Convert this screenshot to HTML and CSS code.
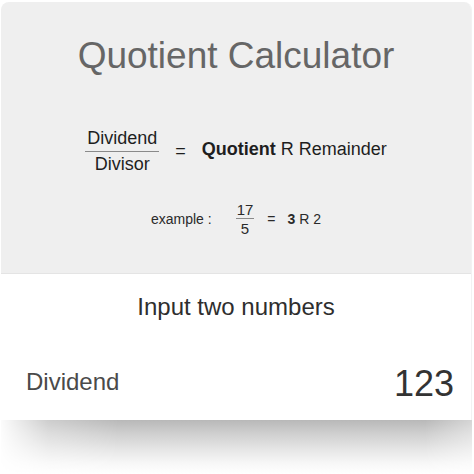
FILE: index.html
```html
<!DOCTYPE html>
<html>
<head>
<meta charset="utf-8">
<link rel="stylesheet" href="styles.css">
</head>
<body>
<div class="card">
  <div class="head">
    <h1 class="title">Quotient Calculator</h1>
    <div class="formula">
      <div class="frac">
        <span class="num">Dividend</span>
        <span class="den">Divisor</span>
      </div>
      <span class="eq">=</span>
      <span class="result"><b>Quotient</b> R Remainder</span>
    </div>
    <div class="example">
      <span class="ex-label">example :</span>
      <div class="frac small">
        <span class="num">17</span>
        <span class="den">5</span>
      </div>
      <span class="eq">=</span>
      <span class="ex-result"><b>3</b> R 2</span>
    </div>
  </div>
  <div class="body">
    <div class="subtitle">Input two numbers</div>
    <div class="row">
      <span class="label">Dividend</span>
      <span class="value">123</span>
    </div>
  </div>
</div>
<div class="shade"></div>
</body>
</html>
```

FILE: styles.css
```css
html, body {
  margin: 0;
  padding: 0;
  background: #ffffff;
}
body {
  font-family: "Liberation Sans", Arial, sans-serif;
}
.card {
  margin: 2px 2px 0 1px;
  border-radius: 8px 8px 0 0;
  overflow: hidden;
  border-right: 1px solid #f2f2f2;
}
.head {
  box-sizing: border-box;
  height: 272px;
  background: #efefef;
  border-bottom: 1px solid #e4e4e4;
  padding-top: 34px;
}
.title {
  margin: 0;
  font-weight: normal;
  font-size: 37px;
  line-height: 40px;
  color: #666666;
  text-align: center;
}
.formula {
  margin-top: 52px;
  display: flex;
  justify-content: center;
  align-items: center;
  color: #1e1e1e;
  font-size: 18px;
  line-height: 20px;
}
.frac {
  display: flex;
  flex-direction: column;
  align-items: stretch;
  text-align: center;
}
.frac .num {
  padding: 0 2px 3px;
  border-bottom: 1px solid #8a8a8a;
}
.frac .den {
  padding-top: 2px;
}
.formula .eq {
  margin: 0 16px 0 16px;
}
.result {
  margin-bottom: 4px;
}
.example {
  margin-top: 27px;
  display: flex;
  justify-content: center;
  align-items: center;
  color: #2a2a2a;
  font-size: 14px;
  line-height: 17px;
}
.frac.small {
  font-size: 15px;
  line-height: 17px;
  margin-left: 24px;
}
.frac.small .num {
  padding: 0 1px 0;
}
.frac.small .den {
  padding-top: 1px;
}
.example .eq {
  margin: 0 12px 0 13px;
}
.body {
  background: #ffffff;
  padding: 19px 17px 16px 25px;
}
.subtitle {
  font-size: 24px;
  line-height: 28px;
  color: #2e2e2e;
  text-align: center;
  margin-left: -8px;
}
.row {
  margin-top: 43px;
  display: flex;
  justify-content: space-between;
  align-items: center;
}
.label {
  font-size: 24px;
  line-height: 28px;
  color: #4a4a4a;
  margin-bottom: 5px;
}
.value {
  font-size: 36px;
  line-height: 40px;
  color: #333333;
}
.shade {
  height: 54px;
  margin: 0 2px 0 1px;
  background: linear-gradient(to bottom, #b8b8b8 0%, #cfcfcf 25%, #e6e6e6 55%, #f7f7f7 80%, #ffffff 100%);
  -webkit-mask-image: linear-gradient(to right, rgba(0,0,0,0.05) 0%, rgba(0,0,0,0.7) 10%, #000 25%, #000 90%, rgba(0,0,0,0.6) 100%);
  mask-image: linear-gradient(to right, rgba(0,0,0,0.05) 0%, rgba(0,0,0,0.7) 10%, #000 25%, #000 90%, rgba(0,0,0,0.6) 100%);
}
```
